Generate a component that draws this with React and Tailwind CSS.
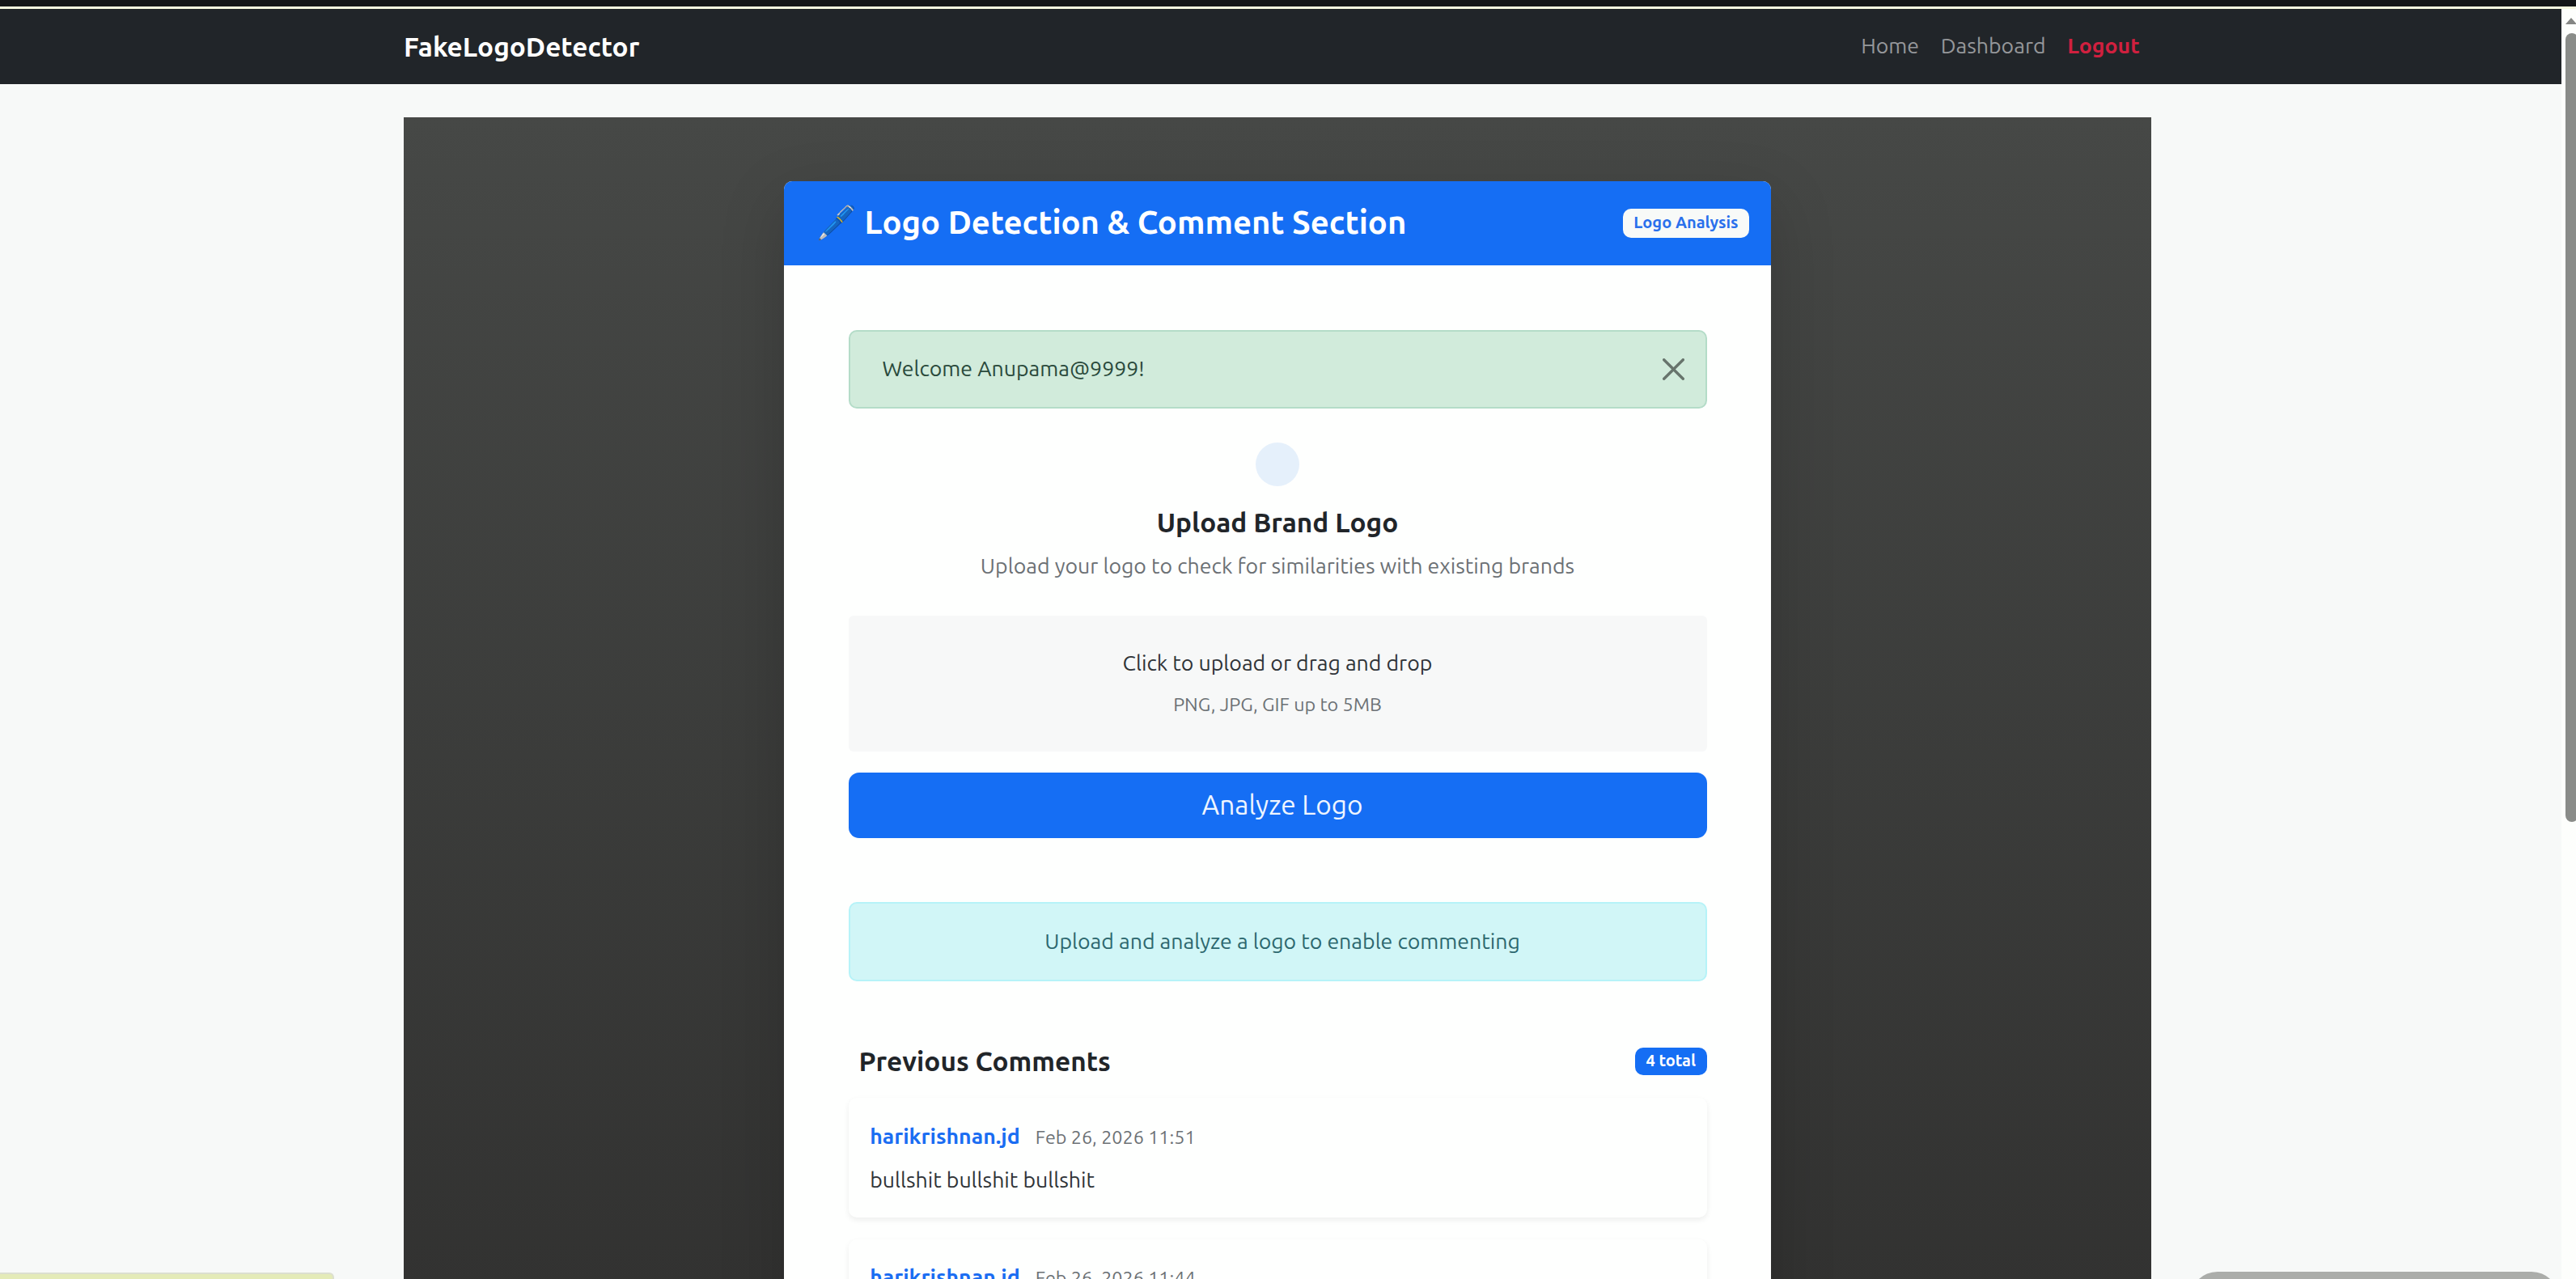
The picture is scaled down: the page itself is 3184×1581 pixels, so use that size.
import React, { useState } from "react";

const comments = [
  {
    id: 4,
    user: "harikrishnan.jd",
    date: "Feb 26, 2026 11:51",
    text: "bullshit bullshit bullshit",
  },
  {
    id: 3,
    user: "harikrishnan.jd",
    date: "Feb 26, 2026 11:44",
    text: "",
  },
];

const Navbar = () => (
  <nav className="h-[96px] shrink-0 bg-[#212529] border-t-[3px] border-[#f6f9e0] flex">
    <div className="w-[2160px] ml-[499px] flex items-center justify-between">
      <a className="text-[33.33px] leading-[50px] font-semibold text-white">
        FakeLogoDetector
      </a>
      <div className="flex text-[26.67px] leading-[40px] text-[#95979a] pb-[4px] pr-px">
        <a className="px-[13.3px]">Home</a>
        <a className="px-[13.3px]">Dashboard</a>
        <a className="px-[13.3px] font-bold text-[#d0203f]">Logout</a>
      </div>
    </div>
  </nav>
);

const CommentCard = ({ comment }) => (
  <div className="h-[148px] shrink-0 bg-[#fefffe] rounded-[10px] p-[26.67px] shadow-[0_3px_7px_rgba(0,0,0,0.07)]">
    <div className="flex items-baseline gap-[19px] leading-[40px]">
      <span className="text-[26.67px] font-bold text-[#1a6df2]">
        {comment.user}
      </span>
      <span className="text-[23.33px] text-[#6c7175]">{comment.date}</span>
    </div>
    <p className="mt-[13px] text-[26.67px] leading-[40px] text-[#303438]">
      {comment.text}
    </p>
  </div>
);

const Scrollbar = () => (
  <div className="w-[18px] bg-[#fdfefc] border-t-[3px] border-[#f6f9e0] pl-[5px] overflow-hidden">
    <svg className="mt-[11px] block" width="14" height="8" viewBox="0 0 14 8">
      <path d="M0 8 L7 0 L14 8 Z" fill="#858684" />
    </svg>
    <div className="mt-[11px] w-[16px] h-[975px] rounded-[8px] bg-[#8a8c89]" />
  </div>
);

export default function App() {
  const [showAlert, setShowAlert] = useState(true);

  return (
    <div className="relative w-[3184px] h-[1581px] overflow-hidden flex flex-col bg-[#f7f9f8] font-[Ubuntu,'Noto_Sans',sans-serif]">
      <div className="h-[8px] shrink-0 bg-[#131518]" />

      <div className="flex flex-1 min-h-0">
        <div className="w-[3166px] flex flex-col">
          <Navbar />

          {/* Main panel */}
          <main className="mt-[41px] ml-[499px] w-[2160px] h-[1600px] shrink-0 pt-[79px] flex flex-col items-center bg-linear-to-b from-[#464846] to-[#30302f]">
            <div className="w-[1220px] h-[1600px] shrink-0 flex flex-col bg-[#fefffe] rounded-t-[10px] shadow-[0_27px_80px_rgba(0,0,0,0.175)]">
              {/* Card header */}
              <div className="h-[104px] shrink-0 flex items-center justify-between pl-[40px] pr-[27px] rounded-t-[10px] bg-[#156ef4]">
                <h4 className="text-[40px] leading-[48px] font-semibold text-white -mt-[3px]">
                  🖊️ Logo Detection &amp; Comment Section
                </h4>
                <span className="h-[36px] px-[13.5px] rounded-[10px] bg-[#f8faf8] text-[20px] leading-[33px] font-bold text-[#2a70ec]">
                  Logo Analysis
                </span>
              </div>

              <div className="flex flex-col px-[79.5px] pt-[80px]">
                {/* Welcome alert */}
                {showAlert && (
                  <div className="h-[97px] flex items-center justify-between pl-[40px] pr-[26px] rounded-[10px] border-2 border-[#b4dcc8] bg-[#d1ebdb] text-[26.67px] text-[#2a4a3c]">
                    <span className="-mt-[4px]">Welcome Anupama@9999!</span>
                    <button onClick={() => setShowAlert(false)}>
                      <svg
                        width="27"
                        height="27"
                        viewBox="0 0 16 16"
                        fill="#000"
                        className="opacity-50"
                      >
                        <path d="M.293.293a1 1 0 0 1 1.414 0L8 6.586 14.293.293a1 1 0 1 1 1.414 1.414L9.414 8l6.293 6.293a1 1 0 0 1-1.414 1.414L8 9.414l-6.293 6.293a1 1 0 0 1-1.414-1.414L6.586 8 .293 1.707a1 1 0 0 1 0-1.414z" />
                      </svg>
                    </button>
                  </div>
                )}

                {/* Upload heading */}
                <div className="mt-[42px] flex flex-col items-center">
                  <div className="size-[54px] rounded-full bg-[#e5f0fb]" />
                  <h5 className="mt-[25px] text-[33.33px] leading-[40px] font-semibold text-[#212529]">
                    Upload Brand Logo
                  </h5>
                  <p className="mt-[13px] text-[26.67px] leading-[40px] text-[#6c7175]">
                    Upload your logo to check for similarities with existing
                    brands
                  </p>
                </div>

                {/* Drop zone */}
                <div className="mt-[42px] h-[168px] pt-[38px] flex flex-col items-center rounded-[6px] bg-[#f7f8f8]">
                  <p className="text-[26.67px] leading-[40px] text-[#303438]">
                    Click to upload or drag and drop
                  </p>
                  <small className="mt-[14px] text-[23.33px] leading-[35px] text-[#6c7175]">
                    PNG, JPG, GIF up to 5MB
                  </small>
                </div>

                <button className="mt-[26px] h-[81px] pl-[12px] pb-[2px] rounded-[13px] bg-[#156ef4] text-[33.33px] text-[#eef5ff]">
                  Analyze Logo
                </button>

                <div className="mt-[79px] h-[98px] pl-[12px] flex items-center justify-center rounded-[10px] border-2 border-[#b6f3f8] bg-[#d1f6f7] text-[26.67px] text-[#2d686f]">
                  <span className="-mt-[3px]">
                    Upload and analyze a logo to enable commenting
                  </span>
                </div>

                {/* Comments */}
                <div className="mt-[79px] pl-[13px] flex items-center justify-between">
                  <h5 className="text-[33.33px] leading-[40px] font-semibold text-[#212529]">
                    Previous Comments
                  </h5>
                  <span className="h-[34px] px-[13.5px] rounded-[10px] bg-[#156ef4] text-[20px] leading-[32px] font-bold text-white">
                    4 total
                  </span>
                </div>
                <div className="mt-[25px] flex flex-col gap-[26.67px]">
                  {comments.map((comment) => (
                    <CommentCard key={comment.id} comment={comment} />
                  ))}
                </div>
              </div>
            </div>
          </main>
        </div>

        <Scrollbar />
      </div>

      {/* Browser status bubble */}
      <div className="absolute left-0 bottom-0 w-[413px] h-[8px] rounded-tr-[6px] border-t-2 border-r-2 border-[#dcdfd0] bg-[#e4ebb8]" />
      <div className="absolute left-[2707px] top-[1572px] w-[456px] h-[68px] rounded-[34px] bg-[#abadaa]" />
    </div>
  );
}
